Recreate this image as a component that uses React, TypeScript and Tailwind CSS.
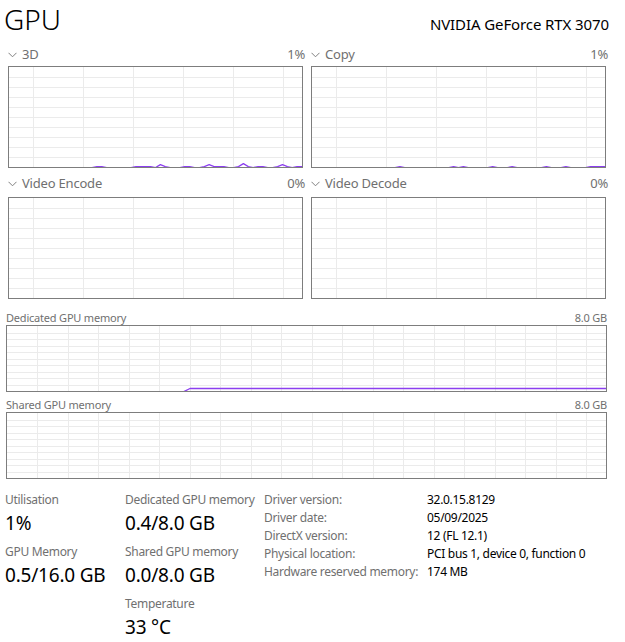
import React from "react";

const FONT = { fontFamily: '"Segoe UI", "Noto Sans", sans-serif' };
const LINE = "#8c3ff0";

// sampled values, 60 intervals across the chart
const threeD = [
  0, 0, 0, 0, 0, 0, 0, 0, 0, 0, 0, 0, 0, 0, 0, 0, 0, 0, 1, 1, 0, 0, 0, 0, 0, 0, 1, 1, 1, 1, 0, 3, 1, 0, 0,
  0, 1, 1, 0, 0, 1, 3, 1, 1, 1, 0, 0, 1, 4, 1, 0, 1, 1, 0, 0, 1, 3, 1, 0, 1, 1,
];
const copy = [
  0, 0, 0, 0, 0, 0, 0, 0, 0, 0, 0, 0, 0, 0, 0, 0, 0, 0, 1, 0, 0, 0, 0, 0, 0, 0, 0, 0, 0, 1, 0, 1, 0, 0, 0,
  0, 0, 1, 0, 0, 0, 1, 0, 0, 0, 0, 0, 0, 1, 0, 0, 0, 1, 0, 0, 0, 0, 1, 1, 1, 1,
];
const empty = new Array(61).fill(0);

function Chart({
  w,
  h,
  vStart,
  vStep,
  hStep,
  points,
}: {
  w: number;
  h: number;
  vStart: number;
  vStep: number;
  hStep: number;
  points: string;
}) {
  const vs: number[] = [];
  for (let x = vStart; x < w; x += vStep) vs.push(Math.round(x) + 0.5);
  const hs: number[] = [];
  for (let y = hStep; y < h - 1; y += hStep) hs.push(Math.round(y) + 0.5);
  return (
    <div className="border border-[#7d7d7d] bg-white" style={{ width: w + 2, height: h + 2 }}>
      <svg width={w} height={h} viewBox={`0 0 ${w} ${h}`} className="block overflow-hidden">
        {hs.map((y) => (
          <line key={"h" + y} x1={0} x2={w} y1={y} y2={y} stroke="#ebebeb" strokeWidth={1} />
        ))}
        {vs.map((x) => (
          <line key={"v" + x} x1={x} x2={x} y1={0} y2={h} stroke="#ebebeb" strokeWidth={1} />
        ))}
        <polyline points={points} fill="none" stroke={LINE} strokeWidth={1.3} strokeLinejoin="round" />
      </svg>
    </div>
  );
}

function toPoints(vals: number[], w: number, h: number) {
  const step = w / (vals.length - 1);
  return vals.map((v, i) => `${(i * step).toFixed(1)},${(h - v + 0.6).toFixed(1)}`).join(" ");
}

function Chevron() {
  return (
    <svg width="9" height="6" viewBox="0 0 9 6" className="mr-[5px]">
      <polyline points="0.5,0.8 4.5,4.8 8.5,0.8" fill="none" stroke="#808080" strokeWidth="1" />
    </svg>
  );
}

function SmallChart({ title, pct, vals, head }: { title: string; pct: string; vals: number[]; head: string }) {
  return (
    <div className="flex flex-col w-[295px]">
      <div className={`flex items-center justify-between ${head} text-[13px] tracking-[-0.2px] text-[#707070] -mr-[2px]`}>
        <div className="flex items-center">
          <Chevron />
          <span>{title}</span>
        </div>
        <span>{pct}</span>
      </div>
      <Chart w={293} h={100} vStart={24} vStep={49.9} hStep={10} points={toPoints(vals, 293, 100)} />
    </div>
  );
}

function MemChart({ title, pts }: { title: string; pts: string }) {
  return (
    <div className="flex flex-col">
      <div className="flex items-end justify-between h-[17px] text-[11px] tracking-[-0.2px] text-[#707070] leading-[15px]">
        <span>{title}</span>
        <span>8.0 GB</span>
      </div>
      <Chart w={599} h={65} vStart={30} vStep={30.5} hStep={6.5} points={pts} />
    </div>
  );
}

function Stat({ label, value }: { label: string; value: string }) {
  return (
    <div className="flex flex-col mb-[9px]">
      <div className="h-[16px] leading-[16px] text-[12px] tracking-[-0.3px] text-[#707070]">{label}</div>
      <div className="h-[27px] leading-[31px] text-[19px] tracking-[-0.2px] text-black">{value}</div>
    </div>
  );
}

const info: [string, string][] = [
  ["Driver version:", "32.0.15.8129"],
  ["Driver date:", "05/09/2025"],
  ["DirectX version:", "12 (FL 12.1)"],
  ["Physical location:", "PCI bus 1, device 0, function 0"],
  ["Hardware reserved memory:", "174 MB"],
];

export default function App() {
  const dedicated = `0,66 176,66 183,62.5 599,62.5`;
  return (
    <div className="w-[625px] h-[642px] bg-white overflow-hidden text-black" style={FONT}>
      <div className="flex items-end justify-between h-[44px] pl-[4px] pr-[16px] pb-[8px]">
        <span className="text-[28px] font-light leading-[34px]">GPU</span>
        <span className="text-[15px] tracking-[-0.1px] leading-[20px] mb-[2px]">NVIDIA GeForce RTX 3070</span>
      </div>

      <div className="grid grid-cols-[295px_295px] gap-x-[8px] pl-[8px]">
        <SmallChart title="3D" pct="1%" vals={threeD} head="h-[22px]" />
        <SmallChart title="Copy" pct="1%" vals={copy} head="h-[22px]" />
        <SmallChart title="Video Encode" pct="0%" vals={empty} head="h-[29px] pt-[2px]" />
        <SmallChart title="Video Decode" pct="0%" vals={empty} head="h-[29px] pt-[2px]" />
      </div>

      <div className="flex flex-col pl-[6px] w-[607px] mt-[9px]">
        <MemChart title="Dedicated GPU memory" pts={dedicated} />
        <div className="h-[3px]" />
        <MemChart title="Shared GPU memory" pts={`0,66 599,66`} />
      </div>

      <div className="flex mt-[13px]">
        <div className="flex flex-col w-[125px] pl-[5px]">
          <Stat label="Utilisation" value="1%" />
          <Stat label="GPU Memory" value="0.5/16.0 GB" />
        </div>
        <div className="flex flex-col w-[139px]">
          <Stat label="Dedicated GPU memory" value="0.4/8.0 GB" />
          <Stat label="Shared GPU memory" value="0.0/8.0 GB" />
          <Stat label="Temperature" value="33 °C" />
        </div>
        <div className="flex flex-col text-[12px] leading-[18px] tracking-[-0.3px] -mt-[1px]">
          {info.map(([k, v]) => (
            <div key={k} className="flex">
              <span className="w-[163px] text-[#707070]">{k}</span>
              <span>{v}</span>
            </div>
          ))}
        </div>
      </div>
    </div>
  );
}
